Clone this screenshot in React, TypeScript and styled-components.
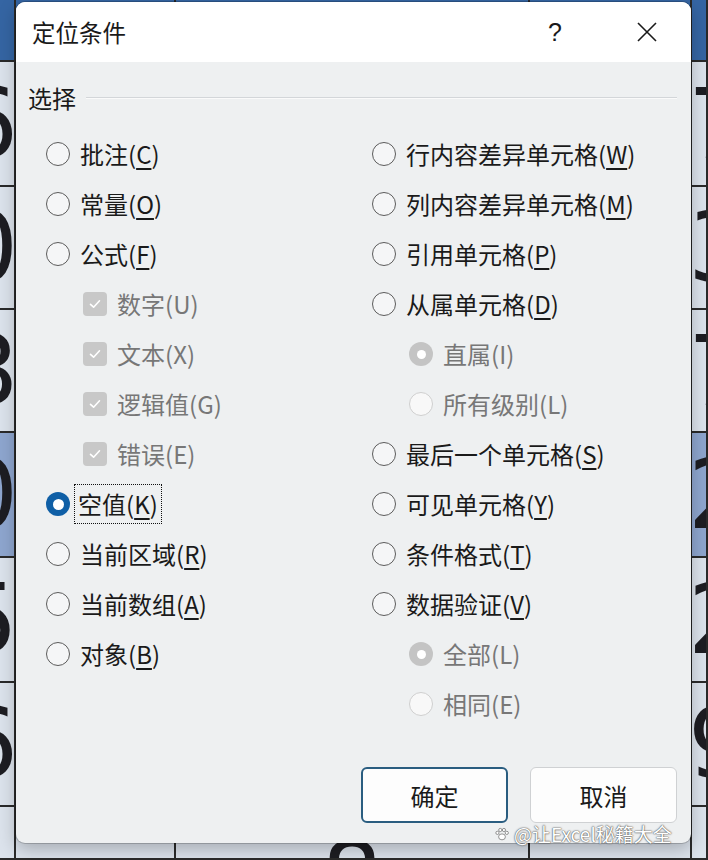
import React from "react";
import styled, { createGlobalStyle, css } from "styled-components";

const GlobalStyle = createGlobalStyle`
  html, body { margin: 0; padding: 0; overflow: hidden; }
  body { font-family: "Noto Sans CJK SC", "Noto Sans", sans-serif; }
`;

const Stage = styled.div`
  position: relative;
  width: 708px;
  height: 860px;
  overflow: hidden;
  background: #dfe5ee;
`;

/* ---------- Excel sheet in the background ---------- */
const Sheet = styled.div`
  display: grid;
  grid-template-columns: 16px 160px 354px 162px 16px;
  grid-template-rows: 62px 125px 123px 123px 125px 125px 124px 53px;
  width: 708px;
  height: 860px;
`;

const Cell = styled.div<{ $tone: "head" | "hi" | "plain"; $align: "start" | "end" | "center" }>`
  box-sizing: border-box;
  overflow: hidden;
  display: flex;
  align-items: center;
  justify-content: ${(p) => (p.$align === "start" ? "flex-start" : p.$align === "end" ? "flex-end" : "center")};
  border-right: 2px solid #2a2a2a;
  border-bottom: 2px solid #2a2a2a;
  background: ${(p) => (p.$tone === "head" ? "#3565a3" : p.$tone === "hi" ? "#8ea6cf" : "#dce3ec")};
`;

const Digit = styled.span<{ $align: "start" | "end" | "center"; $light?: boolean }>`
  font-family: "DejaVu Sans", sans-serif;
  font-size: 96px;
  line-height: 1;
  color: ${(p) => (p.$light ? "#f4f7fb" : "#1d1d22")};
  margin: ${(p) => (p.$align === "end" ? "0 -4px 0 0" : p.$align === "start" ? "0 0 0 -4px" : "0")};
  ${(p) =>
    p.$align === "center" &&
    css`
      margin-top: 90px;
    `}
`;

/* ---------- Dialog ---------- */
const Dialog = styled.div`
  position: absolute;
  left: 16px;
  top: 2px;
  width: 675px;
  height: 841px;
  border-radius: 9px;
  overflow: hidden;
  background: #eef0f1;
  box-shadow: 0 0 0 1px rgba(0, 0, 0, 0.18), 0 6px 18px rgba(0, 0, 0, 0.25);
  display: flex;
  flex-direction: column;
`;

const TitleBar = styled.div`
  height: 60px;
  flex: none;
  background: #ffffff;
  display: flex;
  align-items: center;
  padding: 0 0 0 16px;
`;

const Title = styled.div`
  flex: 1;
  font-size: 23.5px;
  color: #1a1a1a;
`;

const TitleButton = styled.div<{ $w: number }>`
  width: ${(p) => p.$w}px;
  height: 60px;
  display: flex;
  align-items: center;
  justify-content: center;
  font-family: "Liberation Sans", sans-serif;
  font-size: 25px;
  color: #1a1a1a;
`;

const Body = styled.div`
  flex: 1;
  display: flex;
  flex-direction: column;
  padding: 20px 14px 20px 12px;
`;

const GroupHeader = styled.div`
  display: flex;
  align-items: center;
  gap: 10px;
  height: 30px;
  font-size: 24px;
  color: #1a1a1a;
`;

const GroupRule = styled.div`
  flex: 1;
  height: 1px;
  background: #d3d6d9;
  border-bottom: 1px solid #fafafa;
  margin-top: 2px;
`;

const Columns = styled.div`
  display: grid;
  grid-template-columns: 326px 1fr;
  padding: 17px 0 0 18px;
`;

const Column = styled.div`
  display: flex;
  flex-direction: column;
`;

const Row = styled.div<{ $indent?: boolean }>`
  height: 50px;
  display: flex;
  align-items: center;
  gap: 10px;
  padding-left: ${(p) => (p.$indent ? "37px" : "0")};
`;

const Radio = styled.span<{ $checked?: boolean; $disabled?: boolean }>`
  box-sizing: border-box;
  width: 24px;
  height: 24px;
  flex: none;
  border-radius: 50%;
  position: relative;
  ${(p) =>
    p.$checked
      ? css`
          background: ${p.$disabled ? "#c4c4c4" : "#0f5fa6"};
          &::after {
            content: "";
            position: absolute;
            left: 50%;
            top: 50%;
            width: ${p.$disabled ? 9 : 11}px;
            height: ${p.$disabled ? 9 : 11}px;
            margin: ${p.$disabled ? -4.5 : -5.5}px 0 0 ${p.$disabled ? -4.5 : -5.5}px;
            border-radius: 50%;
            background: #ffffff;
          }
        `
      : css`
          background: ${p.$disabled ? "#f8f8f8" : "#f5f6f7"};
          border: 1.5px solid ${p.$disabled ? "#cfcfcf" : "#5b5b5b"};
        `}
`;

const Check = styled.span`
  width: 24px;
  height: 24px;
  flex: none;
  border-radius: 4px;
  background: #c8c8c8;
  display: flex;
  align-items: center;
  justify-content: center;
`;

const Label = styled.span<{ $disabled?: boolean; $focused?: boolean }>`
  font-size: 24px;
  line-height: 30px;
  color: ${(p) => (p.$disabled ? "#777777" : "#1a1a1a")};
  white-space: nowrap;
  u {
    text-decoration-thickness: 1.5px;
    text-underline-offset: 4px;
  }
  ${(p) =>
    p.$focused &&
    css`
      outline: 1.5px dotted #111;
      outline-offset: 0;
      padding: 4px 3px;
      margin-left: -5px;
    `}
`;

const Footer = styled.div`
  margin-top: auto;
  display: flex;
  justify-content: flex-end;
  gap: 22px;
`;

const Button = styled.button<{ $primary?: boolean }>`
  width: 147px;
  height: 56px;
  border-radius: 6px;
  background: #fdfdfd;
  font-family: "Noto Sans CJK SC", sans-serif;
  font-size: 24px;
  color: #1a1a1a;
  cursor: pointer;
  box-sizing: border-box;
  border: ${(p) => (p.$primary ? "2px solid #2a5d80" : "1px solid #cfd1d3")};
`;

const Watermark = styled.div`
  position: absolute;
  left: 494px;
  top: 820px;
  display: flex;
  align-items: center;
  gap: 4px;
  font-size: 19px;
  color: #ffffff;
  text-shadow: 0 0 2px #555, 0 0 1px #333;
  white-space: nowrap;
`;

type Item = {
  kind: "radio" | "check";
  label: string;
  key?: string;
  indent?: boolean;
  disabled?: boolean;
  checked?: boolean;
  focused?: boolean;
};

const left: Item[] = [
  { kind: "radio", label: "批注", key: "C" },
  { kind: "radio", label: "常量", key: "O" },
  { kind: "radio", label: "公式", key: "F" },
  { kind: "check", label: "数字", key: "U", indent: true, disabled: true, checked: true },
  { kind: "check", label: "文本", key: "X", indent: true, disabled: true, checked: true },
  { kind: "check", label: "逻辑值", key: "G", indent: true, disabled: true, checked: true },
  { kind: "check", label: "错误", key: "E", indent: true, disabled: true, checked: true },
  { kind: "radio", label: "空值", key: "K", checked: true, focused: true },
  { kind: "radio", label: "当前区域", key: "R" },
  { kind: "radio", label: "当前数组", key: "A" },
  { kind: "radio", label: "对象", key: "B" },
];

const right: Item[] = [
  { kind: "radio", label: "行内容差异单元格", key: "W" },
  { kind: "radio", label: "列内容差异单元格", key: "M" },
  { kind: "radio", label: "引用单元格", key: "P" },
  { kind: "radio", label: "从属单元格", key: "D" },
  { kind: "radio", label: "直属", key: "I", indent: true, disabled: true, checked: true },
  { kind: "radio", label: "所有级别", key: "L", indent: true, disabled: true },
  { kind: "radio", label: "最后一个单元格", key: "S" },
  { kind: "radio", label: "可见单元格", key: "Y" },
  { kind: "radio", label: "条件格式", key: "T" },
  { kind: "radio", label: "数据验证", key: "V" },
  { kind: "radio", label: "全部", key: "L", indent: true, disabled: true, checked: true },
  { kind: "radio", label: "相同", key: "E", indent: true, disabled: true },
];

const CheckMark = () => (
  <svg width="14" height="14" viewBox="0 0 14 14">
    <path d="M2.5 7.3 L5.6 10.2 L11.5 3.8" fill="none" stroke="#ffffff" strokeWidth="1.6" strokeLinecap="round" strokeLinejoin="round" />
  </svg>
);

const Option = ({ item }: { item: Item }) => (
  <Row $indent={item.indent}>
    {item.kind === "radio" ? (
      <Radio $checked={item.checked} $disabled={item.disabled} />
    ) : (
      <Check>
        <CheckMark />
      </Check>
    )}
    <Label $disabled={item.disabled} $focused={item.focused}>
      {item.label}(
      {item.disabled ? item.key : <u>{item.key}</u>})
    </Label>
  </Row>
);

const rowsTone: ("head" | "hi" | "plain")[] = ["head", "plain", "plain", "plain", "hi", "plain", "plain", "plain"];
const leftDigits = ["", "6", "0", "8", "0", "5", "6", ""];
const rightDigits = ["", "7", "3", "7", "2", "2", "9", ""];

const Paw = () => (
  <svg width="16" height="16" viewBox="0 0 14 14">
    <g fill="#fff" stroke="#666" strokeWidth="0.6">
      <ellipse cx="7" cy="9.5" rx="3" ry="2.6" />
      <circle cx="3" cy="6" r="1.4" />
      <circle cx="5.5" cy="3.5" r="1.4" />
      <circle cx="8.7" cy="3.5" r="1.4" />
      <circle cx="11.2" cy="6" r="1.4" />
    </g>
  </svg>
);

export default function App() {
  return (
    <>
      <GlobalStyle />
      <Stage>
        <Sheet>
          {rowsTone.map((tone, r) =>
            [0, 1, 2, 3, 4].map((c) => {
              const align = c === 0 ? "end" : c === 4 ? "start" : "center";
              const d =
                c === 0 ? leftDigits[r] : c === 4 ? rightDigits[r] : r === 7 && c === 2 ? "8" : "";
              return (
                <Cell key={`${r}-${c}`} $tone={tone} $align={align}>
                  {d && (
                    <Digit $align={align} $light={tone === "head"}>
                      {d}
                    </Digit>
                  )}
                </Cell>
              );
            })
          )}
        </Sheet>

        <Dialog>
          <TitleBar>
            <Title>定位条件</Title>
            <TitleButton $w={96}>?</TitleButton>
            <TitleButton $w={88}>
              <svg width="20" height="20" viewBox="0 0 20 20">
                <path d="M1 1 L19 19 M19 1 L1 19" stroke="#1a1a1a" strokeWidth="1.6" fill="none" />
              </svg>
            </TitleButton>
          </TitleBar>
          <Body>
            <GroupHeader>
              <span>选择</span>
              <GroupRule />
            </GroupHeader>
            <Columns>
              <Column>
                {left.map((it, i) => (
                  <Option key={i} item={it} />
                ))}
              </Column>
              <Column>
                {right.map((it, i) => (
                  <Option key={i} item={it} />
                ))}
              </Column>
            </Columns>
            <Footer>
              <Button $primary>确定</Button>
              <Button>取消</Button>
            </Footer>
          </Body>
        </Dialog>

        <Watermark>
          <Paw />
          <span>@让Excel秘籍大全</span>
        </Watermark>
      </Stage>
    </>
  );
}
